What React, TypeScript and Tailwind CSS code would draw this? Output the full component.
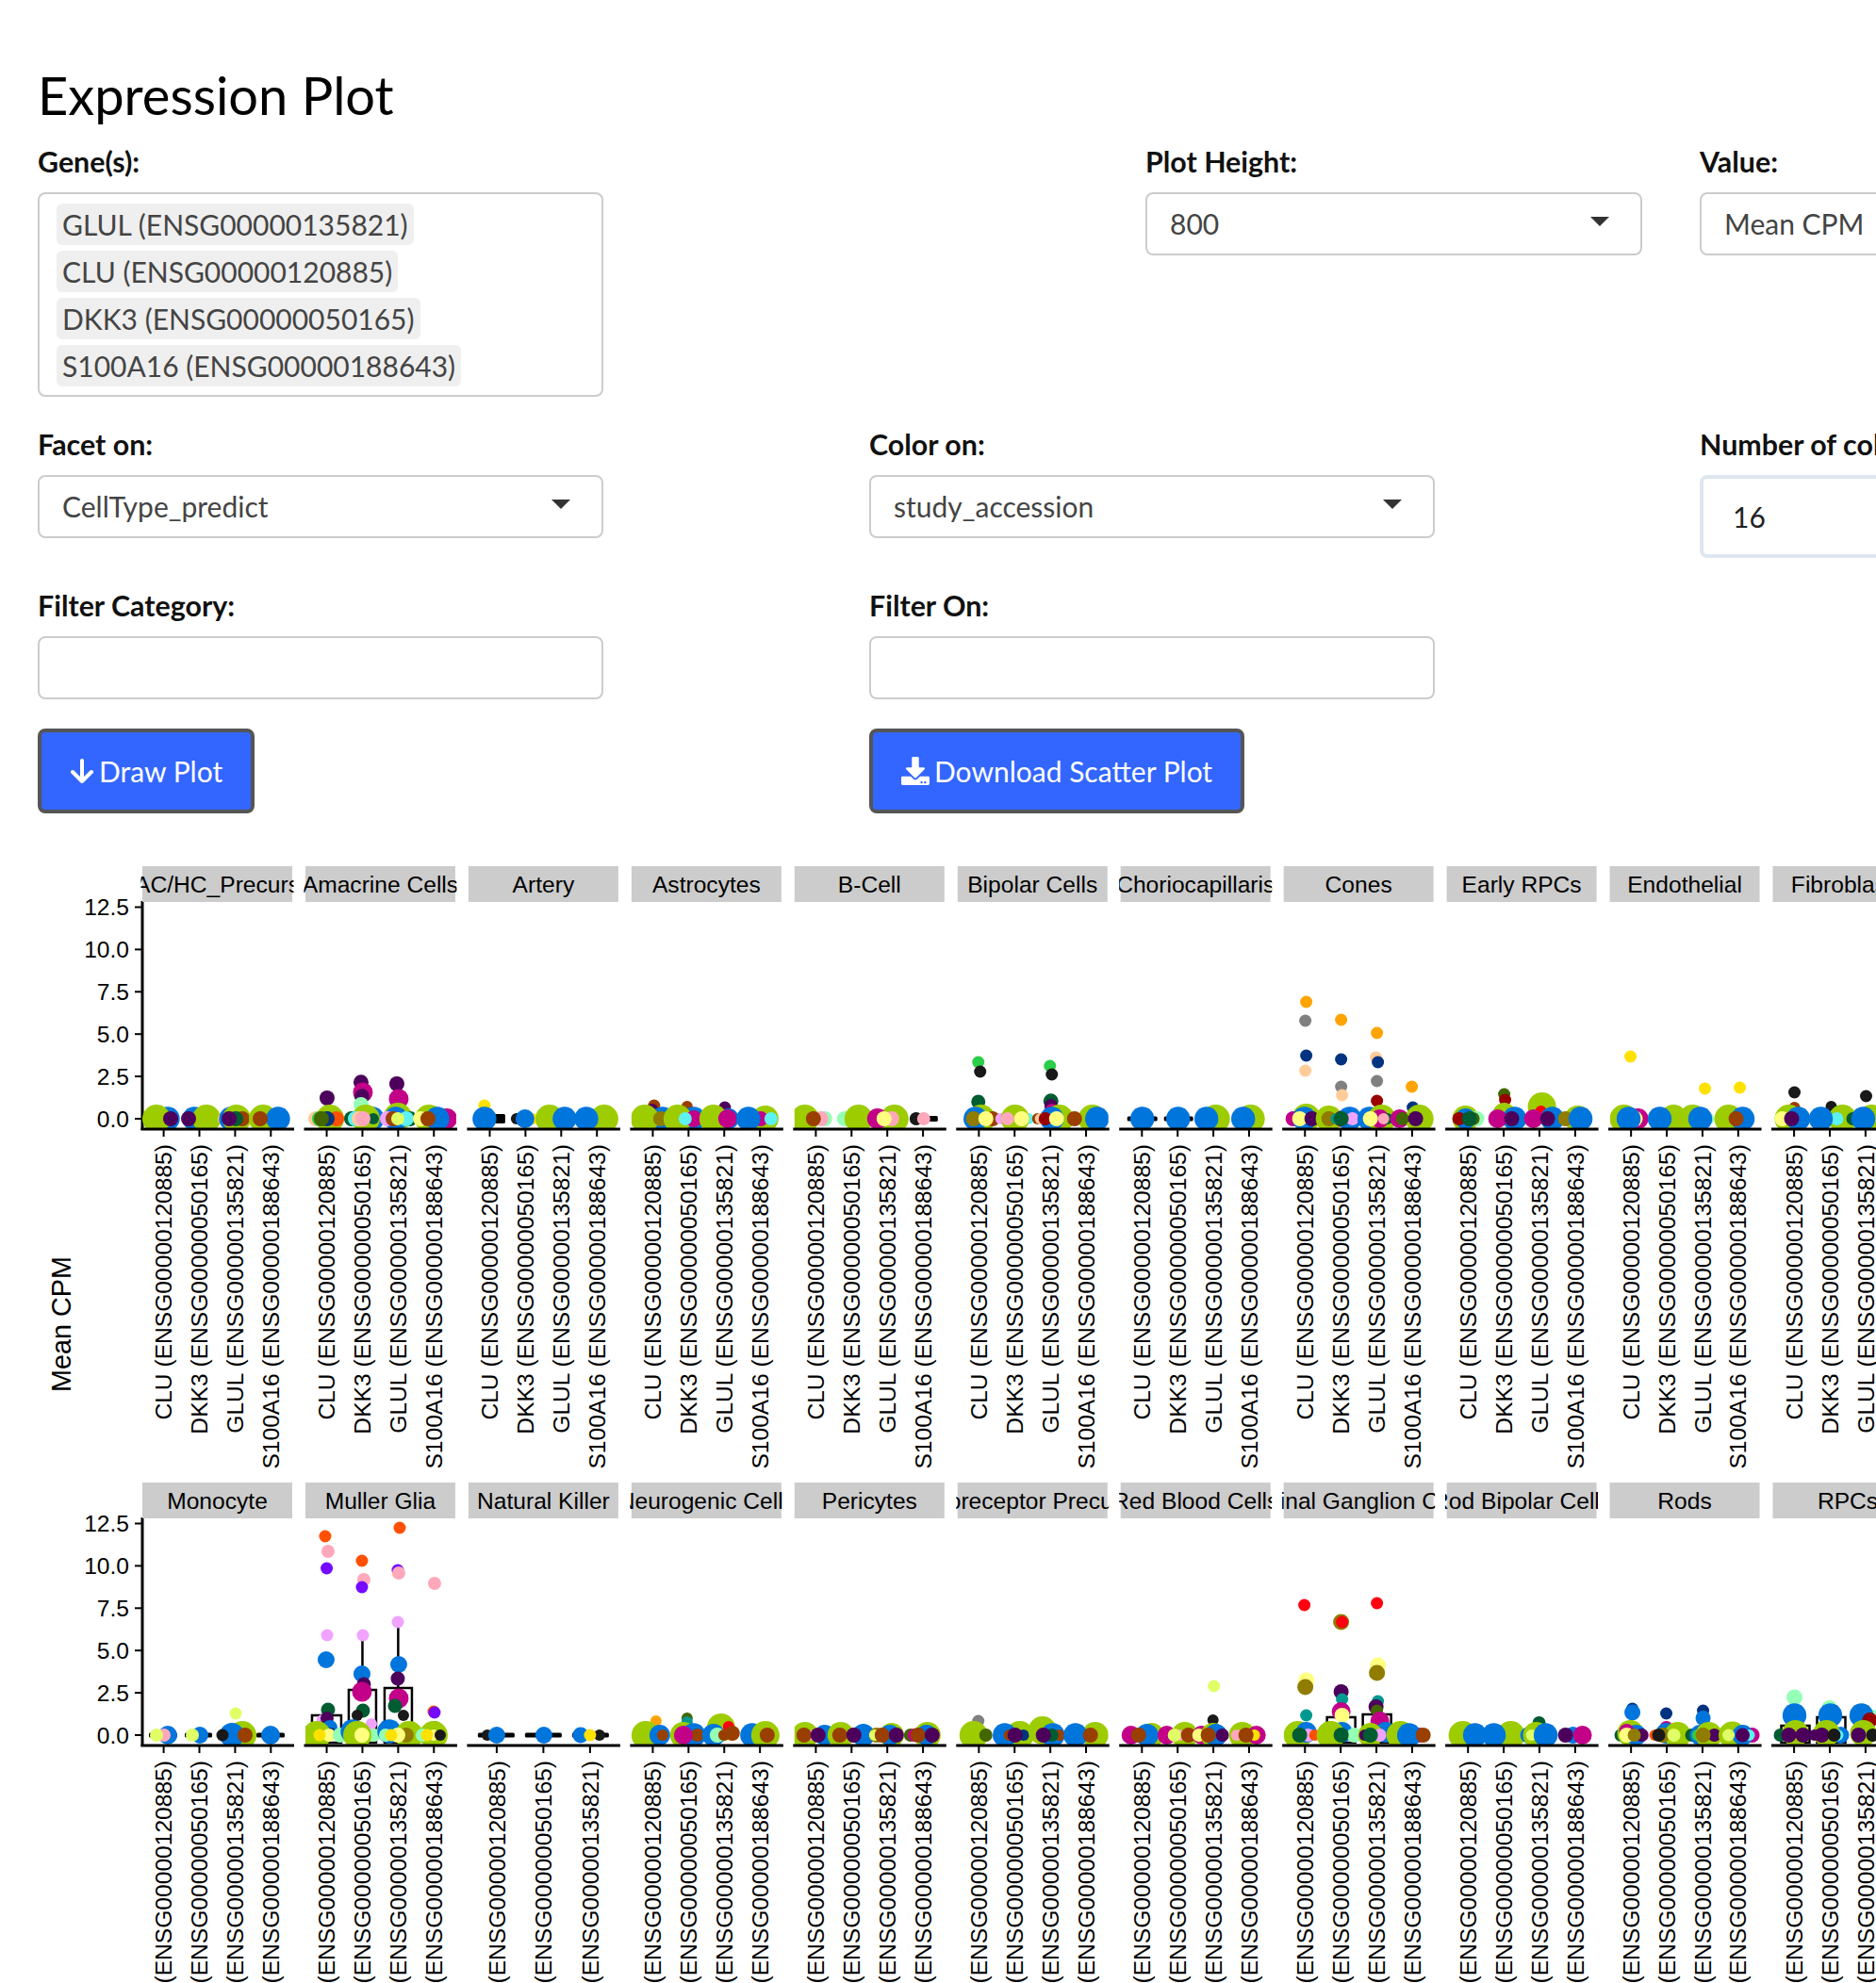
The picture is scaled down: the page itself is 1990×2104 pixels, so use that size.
import { FaDownload } from 'react-icons/fa';

const COLORS: Record<string, string> = {
  a: '#F0A3FF', b: '#0075DC', c: '#993F00', d: '#4C005C', e: '#191919', f: '#005C31',
  g: '#2BCE48', h: '#FFCC99', i: '#808080', j: '#94FFB5', k: '#8F7C00', l: '#9DCC00',
  m: '#C20088', n: '#003380', o: '#FFA405', p: '#FFA8BB', q: '#426600', r: '#FF0010',
  s: '#5EF1F2', t: '#00998F', u: '#E0FF66', v: '#740AFF', w: '#990000', x: '#FFFF80',
  y: '#FFE100', z: '#FF5005',
};

// x from panel left, height above zero, radius, colour key
type Dot = [number, number, number, string];

interface Facet {
  name: string;
  dots: Dot[];
  bars?: [number, number, number][];
  boxes?: [number, number, number][];
  whiskers?: [number, number, number][];
  ticks?: number[];
  genes?: string[];
}

const GENES = [
  'CLU (ENSG00000120885)',
  'DKK3 (ENSG00000050165)',
  'GLUL (ENSG00000135821)',
  'S100A16 (ENSG00000188643)',
];

const TICKS = [22.6, 60.5, 98.4, 136.3];
const PANEL_STEP = 172.95;
const PANEL_LEFT = 151;
const PANEL_WIDTH = 159;
const VALUES = ['0.0', '2.5', '5.0', '7.5', '10.0', '12.5'];

const topRow: Facet[] = [
  {
    name: 'AC/HC_Precurs',
    dots: [
      [27, 0, 12.7, 'b'], [15, 0, 15, 'l'], [30, 0, 8, 'd'],
      [55, 0, 12.7, 'b'], [68, 0, 15, 'l'], [49, 0, 8, 'd'],
      [88, 0, 8, 'h'], [94, 0, 12.7, 'b'], [100, 0, 15, 'l'], [106, 0, 8, 'c'], [99, 0, 8, 'f'], [92, 0, 8, 'd'],
      [128, 0, 15, 'l'], [144, 0, 12.7, 'b'], [125, 0, 8, 'c'],
    ],
  },
  {
    name: 'Amacrine Cells',
    dots: [
      [23, 22, 8, 'd'],
      [25, 0, 12.7, 'b'], [26, 0, 15, 'l'], [11, 0, 8, 'h'], [15, 0, 8, 'g'], [33, 0, 8, 'z'], [23, 0, 8, 'n'], [17, 0, 8, 'q'],
      [59, 38.7, 8, 'd'], [61, 28, 10.5, 'm'], [60, 23.7, 8, 'd'], [59, 15, 8, 'j'],
      [71, 0, 12.7, 'b'], [64, 0, 15, 'l'], [49, 0, 8, 'f'], [53, 0, 8, 's'], [72, 0, 6, 'f'], [57, 0, 8, 'h'], [61, 0, 8, 'p'],
      [97, 37, 8, 'd'], [99, 21, 10.5, 'm'],
      [98, 2, 15, 'l'], [96, 0, 12.7, 'b'], [87, 0, 8, 'a'], [93, 0, 8, 'c'], [111, 0, 8, 'f'], [107, 0, 8, 's'], [98, 0, 7, 'u'],
      [131, 0, 15, 'l'], [150, 0, 11, 'm'], [122, 0, 8, 'x'], [140, 0, 12.7, 'b'], [130, 0, 8, 'c'],
    ],
  },
  {
    name: 'Artery',
    bars: [[24, 39, 10], [46, 70, 4], [95, 105, 3]],
    dots: [
      [17, 14, 6.5, 'y'], [17, 0, 12.7, 'b'],
      [51, 0, 6, 'e'], [68, 0, 6, 'y'], [60, 0, 10, 'b'],
      [86, 0, 15, 'l'], [99, 5, 6, 'y'], [102, 0, 12.7, 'b'],
      [144, 0, 15, 'l'], [125, 0, 12.7, 'b'],
    ],
  },
  {
    name: 'Astrocytes',
    dots: [
      [24, 14, 6.5, 'c'], [22, 10, 6, 'd'], [33, 0, 12.7, 'b'], [14, 0, 15, 'l'], [31, 0, 8, 'k'],
      [59, 13, 6, 'c'], [66, 0, 12.7, 'b'], [49, 0, 15, 'l'], [66, 0, 9, 'm'], [57, 0, 7, 's'],
      [99, 12, 6.5, 'd'], [103, 0, 11, 'b'], [87, 0, 15, 'l'], [102, 0, 10, 'm'],
      [142, 0, 14, 'l'], [137, 0, 8, 'm'], [124, 0, 12.7, 'b'], [148, 0, 7, 's'],
    ],
  },
  {
    name: 'B-Cell',
    bars: [[123, 152, 6]],
    dots: [
      [32, 0, 8, 'j'], [11, 0, 15, 'l'], [28, 0, 8, 'p'], [20, 0, 8, 'c'],
      [53, 0, 8, 'j'], [68, 0, 15, 'l'],
      [106, 0, 15, 'l'], [88, 0, 11, 'm'], [103, 0, 8, 'p'], [95, 0, 8, 'x'],
      [129, 0, 7, 'e'], [137, 0, 7, 'p'],
    ],
  },
  {
    name: 'Bipolar Cells',
    dots: [
      [22, 60, 6.5, 'g'], [24, 50, 6.5, 'e'], [22, 18, 7.5, 'f'],
      [25, 0, 15, 'l'], [37, 0, 8, 'c'], [19, 0, 12.7, 'b'], [17, 0, 8, 'k'], [30, 0, 8, 'x'],
      [46, 0, 6, 'a'], [75, 0, 6, 's'], [61, 0, 15, 'l'], [53, 0, 7, 'p'], [68, 0, 8, 'x'],
      [98, 56, 6.5, 'g'], [100, 47, 6.5, 'e'], [99, 18.7, 8, 'f'], [99, 14, 7, 'd'], [100, 9, 7, 'm'],
      [108, 0, 15, 'l'], [100, 0, 12.7, 'b'], [85, 0, 6, 'c'], [88, 0, 6, 'h'], [93, 0, 7, 'w'], [105, 0, 8, 'x'],
      [135, 0, 6, 's'], [143, 0, 15, 'l'], [124, 0, 8, 'c'], [148, 0, 12.7, 'b'],
    ],
  },
  {
    name: 'Choriocapillaris',
    bars: [[7, 39, 5], [46, 77, 5]],
    dots: [
      [23, 0, 12.7, 'b'], [61, 0, 12.7, 'b'],
      [101, 0, 15, 'l'], [91, 0, 12.7, 'b'],
      [138, 0, 15, 'l'], [130, 0, 12.7, 'b'],
    ],
  },
  {
    name: 'Cones',
    dots: [
      [24, 124, 6.5, 'o'], [23, 104, 6.5, 'i'], [24, 67, 6.5, 'n'], [23, 51, 6.5, 'h'],
      [24, 1, 15, 'l'], [10, 0, 8, 'm'], [22, 0, 12.7, 'b'], [17, 0, 8, 'x'], [30, 0, 8, 'd'],
      [61, 105, 6.5, 'o'], [61, 63, 6.5, 'n'], [61, 34, 6.5, 'i'], [62, 25, 6.5, 'h'],
      [48, 0, 14, 'l'], [48, 0, 8, 'k'], [62, 0, 9, 'm'], [70, 0, 12.7, 'b'], [56, 0, 6, 't'], [73, 0, 7, 'a'], [61, 0, 8, 'f'],
      [99, 91, 6.5, 'o'], [98, 65, 6.5, 'h'], [100, 60, 6.5, 'n'], [99, 40, 6.5, 'i'], [99, 19, 6.5, 'w'],
      [91, 0, 12.7, 'b'], [104, 0, 15, 'l'], [102, 0, 10, 'm'], [110, 0, 6, 'f'], [106, 0, 6, 'p'], [92, 0, 8, 'x'],
      [136, 34, 6.5, 'o'], [137, 12, 6.5, 'n'],
      [123, 0, 10, 'm'], [144, 0, 15, 'l'], [126, 0, 7, 'q'], [140, 0, 8, 'd'],
    ],
  },
  {
    name: 'Early RPCs',
    dots: [
      [20, 0, 14, 'l'], [20, 0, 11, 'b'], [32, 0, 8, 'j'], [13, 0, 7, 'w'], [28, 0, 7, 'q'], [24, 0, 8, 'f'],
      [61, 26, 6.5, 'q'], [62, 20, 6.5, 'w'], [61, 5, 12, 'l'], [72, 0, 12.7, 'b'], [54, 0, 10, 'm'], [69, 0, 8, 'd'],
      [101, 13, 15, 'l'], [100, 8, 6, 'r'], [112, 0, 12.7, 'b'], [92, 0, 10, 'm'], [107, 0, 8, 'd'],
      [139, 0, 14, 'l'], [126, 0, 8, 'k'], [142, 0, 12.7, 'b'],
    ],
  },
  {
    name: 'Endothelial',
    dots: [
      [22, 66, 6.5, 'y'], [101, 32, 6.5, 'y'], [138, 33, 6.5, 'y'],
      [15, 0, 15, 'l'], [30, 0, 11, 'm'], [26, 0, 9, 'x'], [20, 0, 12.7, 'b'],
      [68, 0, 15, 'l'], [53, 0, 12.7, 'b'],
      [88, 0, 15, 'l'], [105, 0, 6, 'j'], [96, 0, 12.7, 'b'],
      [126, 0, 15, 'l'], [141, 0, 12.7, 'b'], [134, 0, 8, 'c'],
    ],
  },
  {
    name: 'Fibroblasts',
    dots: [
      [23, 28, 6.5, 'e'], [23, 12, 6, 'c'], [62, 13, 6, 'e'], [99, 24, 6.5, 'e'],
      [17, 0, 15, 'l'], [10, 0, 8, 'x'], [27, 0, 12.7, 'b'], [20, 0, 8, 'd'],
      [74, 0, 15, 'l'], [68, 0, 7, 's'], [51, 0, 12.7, 'b'], [85, 0, 7, 'f'],
      [105, 0, 15, 'l'], [96, 0, 12.7, 'b'],
    ],
  },
];

const bottomRow: Facet[] = [
  {
    name: 'Monocyte',
    bars: [[7, 37, 5], [45, 74, 5], [121, 151, 5]],
    dots: [
      [27, 0, 10, 'b'], [23, 0, 7, 'p'], [15, 0, 7, 'u'],
      [61, 0, 9, 'b'], [53, 0, 7, 'u'],
      [99, 23, 6.5, 'u'], [106, 0, 15, 'l'], [95, 0, 13, 'b'], [85, 0, 6.5, 'e'], [109, 0, 8, 'c'],
      [136, 0, 10, 'b'],
    ],
  },
  {
    name: 'Muller Glia',
    boxes: [[7, 38, 21], [46, 75, 48], [84, 113, 50]],
    whiskers: [[60.5, 48, 100], [98.4, 50, 115]],
    dots: [
      [21, 211, 6.5, 'z'], [24, 195, 7, 'p'], [22.6, 177, 6.5, 'v'], [23, 106, 6.5, 'a'], [22, 80, 9, 'b'],
      [24, 27, 7.5, 'f'], [18, 16, 6, 'a'], [23, 18, 7, 'd'], [26, 8, 8, 'b'], [27, 2, 6, 'n'],
      [12, 0, 15, 'l'], [25, 0, 7, 'x'], [37, 0, 8, 'j'], [15, 0, 6.5, 'y'],
      [60, 185, 6.5, 'z'], [62, 165, 7, 'p'], [60, 157, 6.5, 'v'], [61, 106, 6.5, 'a'], [60, 65, 9, 'b'],
      [62, 54, 7.5, 'd'], [60, 46, 10.5, 'm'], [61, 26, 7.5, 'f'], [55, 21, 6, 'e'], [70, 12, 6, 'a'],
      [50, 4, 12.7, 'b'], [68, 0, 6, 'c'], [73, 0, 7, 'j'], [55, 0, 15, 'l'], [60, 0, 8, 'x'],
      [100, 220, 6.5, 'z'], [98, 175, 6.5, 'v'], [99, 172, 7, 'p'], [98, 120, 6.5, 'a'], [99, 75, 9, 'b'],
      [98, 60, 7.5, 'd'], [99, 39, 10.5, 'm'], [95, 31, 7.5, 'f'], [104, 21, 6, 'e'],
      [89, 4, 12.7, 'b'], [85, 0, 7, 'j'], [110, 0, 15, 'l'], [107, 0, 8, 'k'], [98, 0, 8, 'x'], [91, 0, 6.5, 'y'],
      [137, 161, 7, 'p'], [136, 25, 6.5, 'z'], [137, 24, 6.5, 'v'], [137, 6, 9, 'b'],
      [136, 0, 15, 'l'], [124, 0, 7, 'j'], [136, 0, 6, 'x'], [129, 0, 6.5, 'y'], [143, 0, 6, 'e'],
    ],
  },
  {
    name: 'Natural Killer',
    ticks: [30, 79.5, 129],
    genes: GENES.slice(0, 3),
    bars: [[10, 49, 5], [60, 99, 5], [110, 149, 5]],
    dots: [
      [20, 0, 6, 'e'], [30, 0, 9, 'b'],
      [80, 0, 9, 'b'],
      [119, 0, 8.5, 'b'], [139, 0, 6, 'e'], [129, 0, 6.5, 'y'],
    ],
  },
  {
    name: 'Neurogenic Cells',
    dots: [
      [26, 15, 6, 'o'], [15, 0, 15, 'l'], [30, 0, 11, 'b'], [33, 0, 6, 'c'],
      [59, 18, 6, 'q'], [59, 14, 6, 't'], [55, 0, 14, 'l'], [66, 0, 12.7, 'b'], [70, 0, 7, 'c'], [55, 0, 10, 'm'],
      [95, 8, 15, 'l'], [87, 0, 12, 'b'], [91, 0, 8, 'j'], [103, 9, 6, 'r'], [98, 0, 6, 'c'], [107, 2, 8, 'c'],
      [128, 0, 12.7, 'b'], [142, 0, 15, 'l'], [144, 0, 8, 'c'],
    ],
  },
  {
    name: 'Pericytes',
    dots: [
      [11, 0, 14, 'l'], [20, 0, 6, 'p'], [32, 0, 11, 'b'], [24, 0, 7, 'm'], [10, 0, 8, 'c'], [25, 0, 8, 'd'],
      [49, 0, 14, 'l'], [63, 0, 8, 'm'], [73, 0, 12, 'b'], [48, 0, 8, 'c'], [63, 0, 8, 'd'],
      [87, 0, 8, 'k'], [85, 0, 6, 'u'], [103, 0, 13, 'l'], [101, 0, 11, 'b'], [93, 0, 8, 'c'], [108, 0, 8, 'd'],
      [123, 0, 7, 'q'], [127, 0, 7, 'm'], [141, 0, 14, 'l'], [140, 0, 11, 'b'], [131, 0, 8, 'c'], [146, 0, 8, 'd'],
    ],
  },
  {
    name: 'Photoreceptor Precursors',
    dots: [
      [22, 15, 6.5, 'i'], [17, 0, 15, 'l'], [30, 0, 7, 'q'],
      [66, 0, 15, 'l'], [50, 0, 12.7, 'b'], [55, 0, 6, 'c'], [70, 0, 6, 'n'], [61, 0, 8, 'd'],
      [90, 5, 15, 'l'], [101, 0, 12.7, 'b'], [108, 0, 6, 'c'], [100, 0, 7, 'f'], [91, 0, 8, 'd'],
      [146, 0, 14, 'l'], [125, 0, 12.7, 'b'], [141, 0, 8, 'c'],
    ],
  },
  {
    name: 'Red Blood Cells',
    dots: [
      [11, 0, 10, 'm'], [33, 0, 13, 'l'], [28, 0, 12, 'b'], [19, 0, 8, 'c'],
      [49, 0, 10, 'm'], [68, 0, 14, 'l'], [62, 0, 6, 'p'], [57, 0, 7, 'u'], [72, 0, 8, 'c'],
      [99, 52, 6.5, 'u'], [98, 16, 6, 'e'], [86, 0, 10, 'm'], [83, 0, 7, 'x'], [98, 0, 13, 'l'], [101, 0, 12, 'b'], [93, 0, 8, 'c'], [108, 0, 7, 'd'],
      [129, 0, 14, 'l'], [123, 0, 6, 'p'], [144, 0, 10, 'm'], [142, 0, 6, 'y'], [133, 0, 8, 'c'],
    ],
  },
  {
    name: 'Retinal Ganglion Cells',
    boxes: [[46, 76, 19], [84, 114, 22]],
    dots: [
      [22, 138, 6.5, 'r'], [24, 58, 8.5, 'x'], [23, 51, 8.5, 'k'], [24, 21, 6.5, 't'],
      [15, 0, 15, 'l'], [24, 3, 11, 'b'], [26, 0, 7, 'a'], [33, 0, 6, 'z'], [17, 0, 8, 'f'],
      [61, 120, 8.5, 'k'], [62, 120, 6.5, 'r'], [61, 46, 8, 'd'], [62, 38, 6.5, 't'], [61, 25, 10, 'm'], [62, 21, 8, 'x'],
      [62, 3, 11, 'b'], [50, 0, 15, 'l'], [72, 0, 6, 'z'], [75, 0, 8, 'j'], [61, 0, 8, 'f'],
      [99, 140, 6.5, 'r'], [100, 74, 8.5, 'x'], [99, 66, 8.5, 'k'], [100, 36, 6.5, 't'], [98, 30, 8, 'd'], [99, 26, 6.5, 'q'], [102, 15, 10, 'm'],
      [108, 3, 11, 'b'], [92, 0, 13, 'l'], [102, 0, 7, 'a'], [86, 0, 6, 'd'], [92, 0, 8, 'f'],
      [124, 0, 15, 'l'], [143, 0, 8, 'm'], [133, 0, 12.7, 'b'], [148, 0, 8, 'c'],
    ],
  },
  {
    name: 'Rod Bipolar Cells',
    dots: [
      [17, 0, 15, 'l'], [30, 0, 12.7, 'b'],
      [68, 0, 15, 'l'], [50, 0, 12.7, 'b'],
      [98, 13, 7, 'f'], [87, 0, 9, 'b'], [95, 0, 14, 'l'], [90, 0, 6, 'u'], [105, 0, 12.7, 'b'],
      [134, 0, 9, 'b'], [126, 0, 8, 'd'], [144, 0, 10, 'm'],
    ],
  },
  {
    name: 'Rods',
    dots: [
      [24, 28, 6.5, 'n'], [24, 24, 8.5, 'b'], [12, 0, 7, 'f'], [22, 2, 14, 'l'], [28, 0, 11, 'b'], [18, 4, 8, 'm'], [36, 0, 6, 'a'], [34, 0, 7, 'd'], [18, 0, 8, 'x'], [26, 0, 7, 'k'],
      [60, 23, 6.5, 'n'], [60, 8, 7, 'm'], [48, 0, 6, 'z'], [60, 2, 11, 'b'], [72, 0, 14, 'l'], [56, 0, 8, 'k'], [52, 0, 7, 'e'], [68, 0, 7, 'u'],
      [99, 26, 6.5, 'n'], [99, 18, 8, 'b'], [87, 0, 7, 'f'], [96, 0, 11, 'b'], [93, 0, 6, 'g'], [105, 0, 14, 'l'], [111, 0, 7, 'd'], [99, 0, 8, 'k'],
      [151, 0, 8, 'm'], [130, 0, 14.5, 'l'], [141, 0, 11, 'b'], [148, 0, 6, 's'], [126, 0, 6.5, 'u'], [141, 0, 7.5, 'd'],
    ],
  },
  {
    name: 'RPCs',
    boxes: [[9, 39, 10], [47, 77, 19]],
    dots: [
      [23, 40, 8.5, 'j'], [23, 21, 12.7, 'b'], [8, 0, 7, 'f'], [24, 2, 14, 'l'], [17, 0, 8, 'd'], [32, 0, 8, 'd'],
      [60, 29, 8, 'j'], [61, 21, 12.7, 'b'], [72, 0, 9, 'b'], [57, 2, 14, 'l'], [69, 0, 6, 's'], [44, 0, 6, 'd'], [52, 0, 8, 'd'], [65, 0, 7, 'e'],
      [106, 19, 8, 'j'], [94, 21, 12.7, 'b'], [103, 16, 8, 'w'], [96, 2, 14, 'l'], [91, 0, 8, 'd'], [106, 0, 7, 'e'],
    ],
  },
];

const FONT = "'Liberation Sans', Arial, sans-serif";

const FacetPanel = ({ facet, index, top }: { facet: Facet; index: number; top: number }) => {
  const left = PANEL_LEFT + PANEL_STEP * index;
  const zero = top + 268;
  const axis = top + 279;
  const panelTop = top + 38;
  const ticks = facet.ticks ?? TICKS;
  const genes = facet.genes ?? GENES;
  return (
    <g>
      <rect x={left} y={top} width={PANEL_WIDTH} height={38} fill="#CCCCCC" />
      <svg x={left - 1.5} y={top} width={PANEL_WIDTH + 3} height={38}>
        <text x={PANEL_WIDTH / 2 + 1.5} y={27.5} textAnchor="middle" fontSize={24.6} fontFamily={FONT} fill="#000">
          {facet.name}
        </text>
      </svg>
      <svg x={left} y={panelTop} width={PANEL_WIDTH + 1} height={axis - panelTop}>
        {facet.boxes?.map(([x1, x2, v], i) => (
          <rect key={i} x={x1} y={zero - panelTop - v} width={x2 - x1} height={v + 8} fill="#fff" stroke="#000" strokeWidth={2.5} />
        ))}
        {facet.whiskers?.map(([x, v1, v2], i) => (
          <line key={i} x1={x} x2={x} y1={zero - panelTop - v1} y2={zero - panelTop - v2} stroke="#000" strokeWidth={2.5} />
        ))}
        {facet.bars?.map(([x1, x2, h], i) => (
          <rect key={i} x={x1} y={zero - panelTop - h / 2} width={x2 - x1} height={h} rx={1.5} fill="#000" />
        ))}
        {facet.dots.map(([x, v, r, c], i) => (
          <circle key={i} cx={x} cy={zero - panelTop - v} r={r} fill={COLORS[c]} />
        ))}
      </svg>
      <line x1={left - 1.5} x2={left + 161} y1={axis} y2={axis} stroke="#000" strokeWidth={3} />
      {ticks.map((t, i) => (
        <g key={t}>
          <line x1={left + t} x2={left + t} y1={axis} y2={axis + 8} stroke="#000" strokeWidth={2} />
          <text
            transform={`translate(${left + t} ${axis + 16}) rotate(-90)`}
            dy="0.35em"
            textAnchor="end"
            fontSize={24.6}
            fontFamily={FONT}
            fill="#000"
          >
            {genes[i]}
          </text>
        </g>
      ))}
    </g>
  );
};

const ValueAxis = ({ top }: { top: number }) => {
  const zero = top + 268;
  return (
    <g>
      <line x1={151} x2={151} y1={top + 37} y2={top + 280} stroke="#000" strokeWidth={3} />
      {VALUES.map((v, i) => {
        const y = zero - i * 44.9;
        return (
          <g key={v}>
            <line x1={143} x2={150} y1={y} y2={y} stroke="#000" strokeWidth={2} />
            <text x={137} y={y} dy="0.36em" textAnchor="end" fontSize={24.6} fontFamily={FONT} fill="#000">
              {v}
            </text>
          </g>
        );
      })}
    </g>
  );
};

const ExpressionChart = () => (
  <svg className="block mt-[37px]" width={1990} height={1204} viewBox="0 900 1990 1204">
    <text transform="translate(65 1405) rotate(-90)" dy="0.35em" textAnchor="middle" fontSize={28.8} fontFamily={FONT} fill="#000">
      Mean CPM
    </text>
    <ValueAxis top={919} />
    <ValueAxis top={1573} />
    {topRow.map((f, i) => (
      <FacetPanel key={f.name} facet={f} index={i} top={919} />
    ))}
    {bottomRow.map((f, i) => (
      <FacetPanel key={f.name} facet={f} index={i} top={1573} />
    ))}
  </svg>
);

const Field = ({ label, className, children }: { label: string; className: string; children?: React.ReactNode }) => (
  <div className={`${className} shrink-0`}>
    <label className="block font-bold text-[30.4px] leading-[40px] text-[#111] whitespace-nowrap mb-[13px]">{label}</label>
    {children}
  </div>
);

const Select = ({ value, caret = true, className = '' }: { value?: string; caret?: boolean; className?: string }) => (
  <div className={`h-[67px] border-2 border-[#ccc] rounded-lg bg-white flex items-center justify-between pl-[24px] pr-[33px] text-[30px] text-[#444] ${className}`}>
    <span>{value}</span>
    {caret && <span className="w-0 h-0 mb-[6px] border-x-[10px] border-x-transparent border-t-[10px] border-t-[#333]" />}
  </div>
);

const Chip = ({ children }: { children: string }) => (
  <div>
    <span className="inline-block h-[44px] leading-[44px] rounded-md bg-[#efefef] px-[6px] mb-[6px] text-[30px] text-[#444] whitespace-nowrap">
      {children}
    </span>
  </div>
);

const ActionButton = ({ children }: { children: React.ReactNode }) => (
  <button className="h-[90px] flex items-center gap-[5px] bg-[#3366FF] border-4 border-[#555] rounded-lg px-[30px] text-[30px] text-white whitespace-nowrap">
    {children}
  </button>
);

export default function App() {
  return (
    <div className="w-[1990px] h-[2104px] overflow-hidden bg-white font-['Lato',sans-serif]">
      <div className="w-[2450px] pl-[40px] pt-[67px]">
        <h3 className="text-[56px] leading-[68px] font-normal text-black">Expression Plot</h3>

        <div className="flex mt-[16px]">
          <Field label="Gene(s):" className="w-[1175px]">
            <div className="w-[600px] h-[217px] border-2 border-[#ccc] rounded-lg pl-[18px] pt-[10px]">
              <Chip>GLUL (ENSG00000135821)</Chip>
              <Chip>CLU (ENSG00000120885)</Chip>
              <Chip>DKK3 (ENSG00000050165)</Chip>
              <Chip>S100A16 (ENSG00000188643)</Chip>
            </div>
          </Field>
          <Field label="Plot Height:" className="w-[588px]">
            <Select value="800" className="w-[527px]" />
          </Field>
          <Field label="Value:" className="w-[600px]">
            <Select value="Mean CPM" className="w-full" />
          </Field>
        </div>

        <div className="flex mt-[30px]">
          <Field label="Facet on:" className="w-[882px]">
            <Select value="CellType_predict" className="w-[600px]" />
          </Field>
          <Field label="Color on:" className="w-[881px]">
            <Select value="study_accession" className="w-[600px]" />
          </Field>
          <Field label="Number of columns:" className="w-[600px]">
            <div className="h-[88px] w-full border-4 border-[#dee6ee] rounded-lg pl-[31px] flex items-center text-[30px] text-[#222]">16</div>
          </Field>
        </div>

        <div className="flex mt-[30px]">
          <Field label="Filter Category:" className="w-[882px]">
            <Select className="w-[600px]" caret={false} />
          </Field>
          <Field label="Filter On:" className="w-[881px]">
            <Select className="w-[600px]" caret={false} />
          </Field>
        </div>

        <div className="flex mt-[31px]">
          <div className="w-[882px] shrink-0">
            <ActionButton>
              <svg width="26" height="26" viewBox="0 0 26 26" fill="none" stroke="currentColor" strokeWidth="4" strokeLinecap="round" strokeLinejoin="round">
                <path d="M13 2v21" />
                <path d="M3 14l10 10 10-10" />
              </svg>
              Draw Plot
            </ActionButton>
          </div>
          <ActionButton>
            <FaDownload size={30} />
            Download Scatter Plot
          </ActionButton>
        </div>
      </div>
      <ExpressionChart />
    </div>
  );
}
